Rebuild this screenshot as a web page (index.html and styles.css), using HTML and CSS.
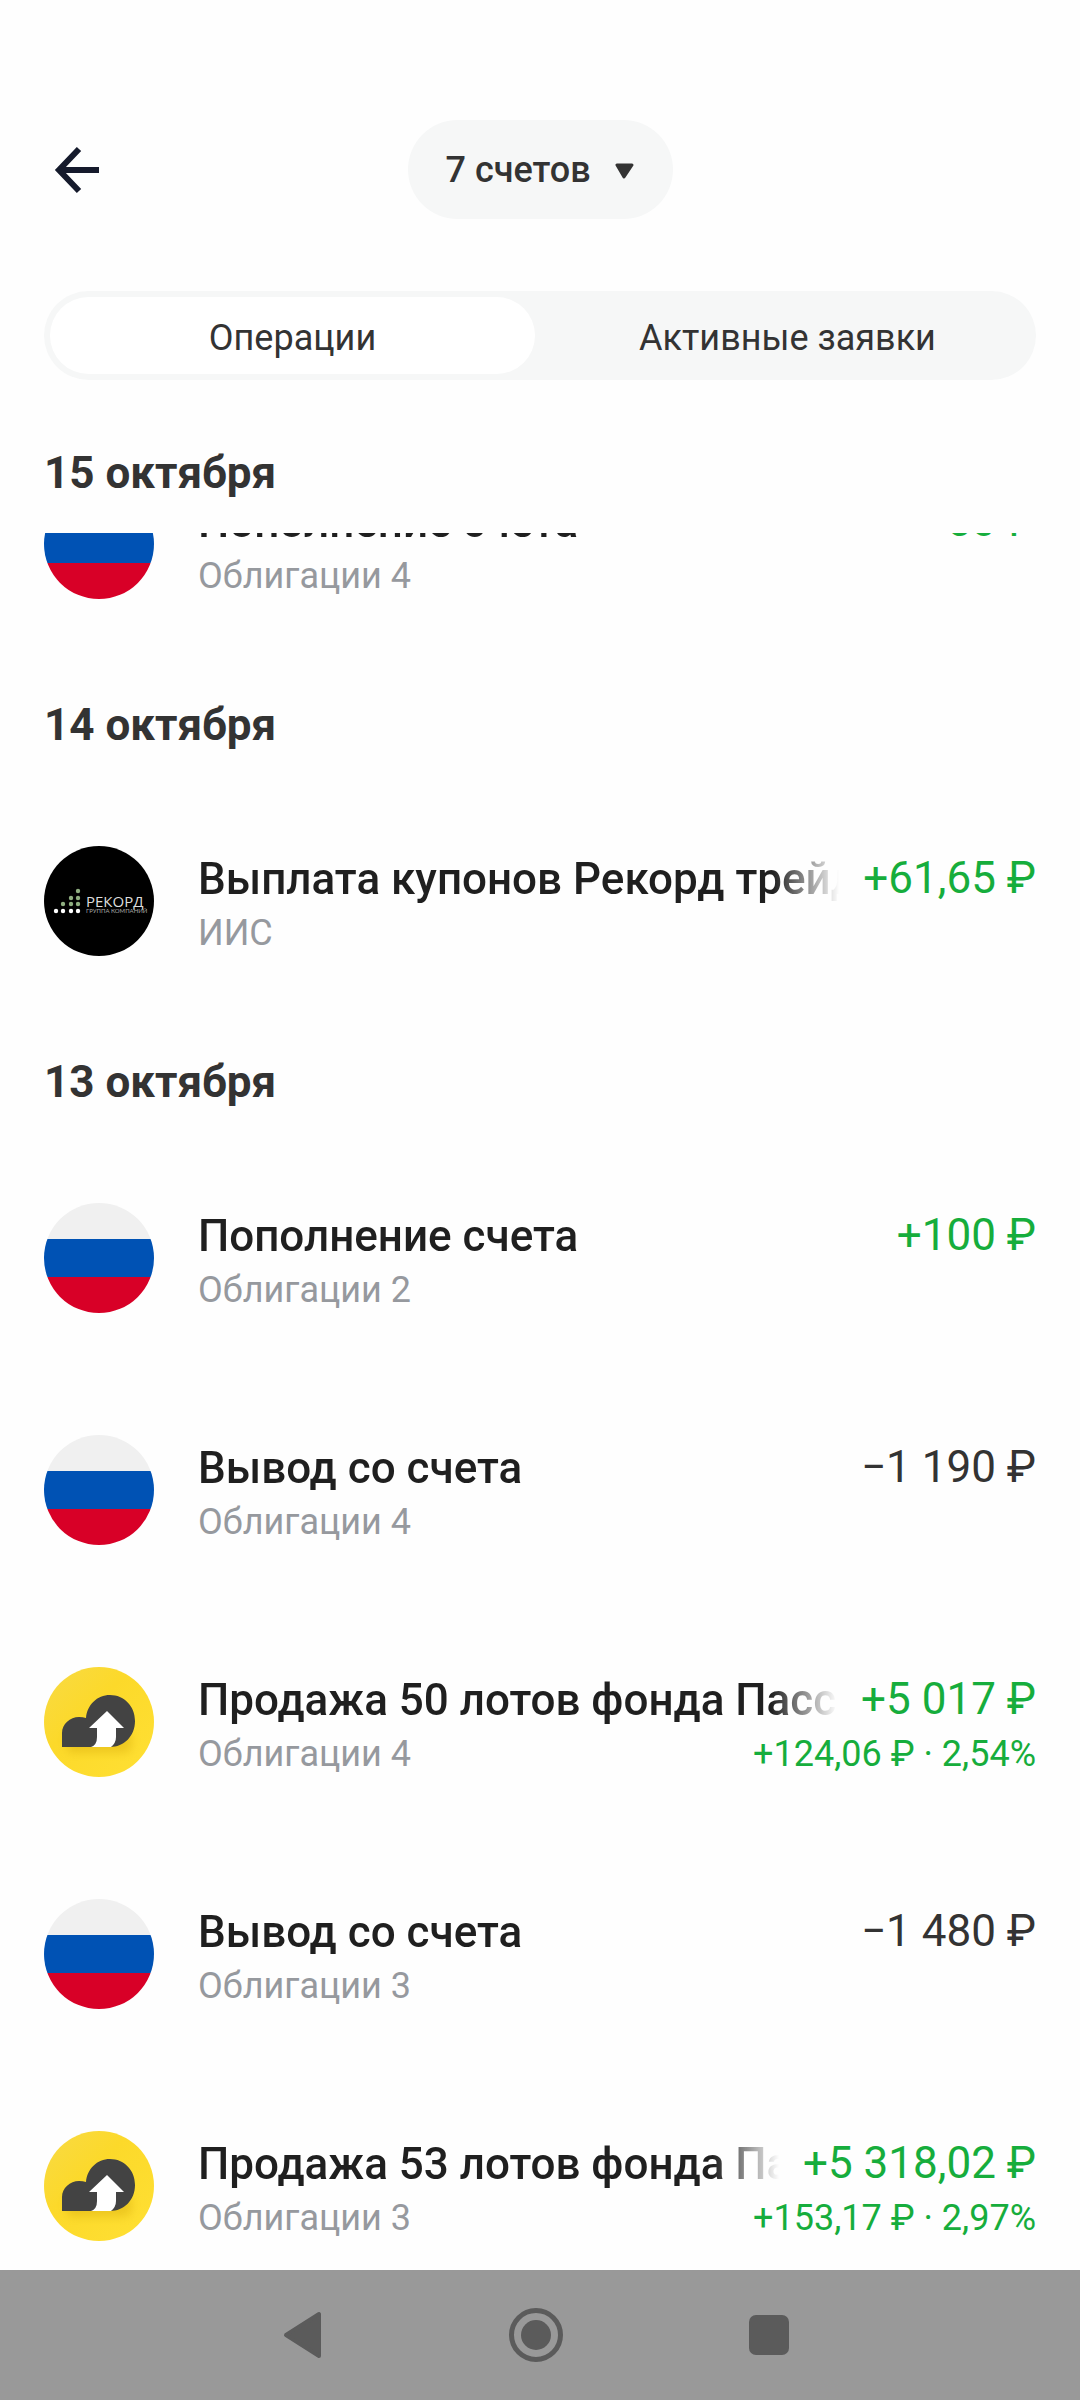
FILE: index.html
```html
<!DOCTYPE html>
<html lang="ru">
<head>
    <title>Операции</title>
    <meta charset="UTF-8">
    <meta name="viewport" content="width=device-width, initial-scale=1.0">
    <link rel="stylesheet" href="styles.css">
</head>
<body>
    <!-- Shared pictures for the operation rows -->
    <svg class="sprite" aria-hidden="true">
        <defs>
            <clipPath id="round"><circle cx="55" cy="55" r="55"/></clipPath>
            <linearGradient id="yellow" x1="0" y1="0" x2="1" y2="1">
                <stop offset="0" stop-color="#f8da45"/>
                <stop offset="0.4" stop-color="#fcd92a"/>
                <stop offset="1" stop-color="#ffe034"/>
            </linearGradient>
            <filter id="soft" x="-20%" y="-20%" width="140%" height="160%">
                <feGaussianBlur stdDeviation="4"/>
            </filter>
        </defs>
        <symbol id="flag" viewBox="0 0 110 110">
            <g clip-path="url(#round)">
                <rect width="110" height="36" fill="#f0f0f0"/>
                <rect y="36" width="110" height="38" fill="#0052b4"/>
                <rect y="74" width="110" height="36" fill="#d80027"/>
            </g>
        </symbol>
        <symbol id="fund" viewBox="0 0 110 110">
            <circle cx="55" cy="55" r="55" fill="url(#yellow)"/>
            <path d="M22 66h66v12a8 8 0 0 1-8 8H30a8 8 0 0 1-8-8z" fill="#c99a00" opacity="0.3" filter="url(#soft)"/>
            <path d="M18 80V66C18 57 26 50 35 50q4 0 7 1C43 38 53 28 66 28c14 0 25 11 25 26 0 15-11 26-25 26z" fill="#434343"/>
            <path d="M63 44L80 61H72V70Q72 76 67 80H47Q53 78 53 70V61H45z" fill="#fff"/>
        </symbol>
    </svg>

    <div class="app">
        <header class="header">
            <div class="topbar">
                <button class="back" type="button" aria-label="Назад">
                    <svg width="48" height="48" viewBox="0 0 48 48" fill="none" stroke="#151a2c" stroke-width="6">
                        <path d="M47 24H7M27 3L7 24l20 21"/>
                    </svg>
                </button>
                <div class="accounts">
                    <select class="accounts-select" aria-label="Счета">
                        <option>7 счетов</option>
                    </select>
                    <svg class="accounts-arrow" width="20" height="16" viewBox="0 0 20 16">
                        <path d="M2 2h15L9 14z" fill="#333" stroke="#333" stroke-width="3" stroke-linejoin="round"/>
                    </svg>
                </div>
            </div>
            <div class="tabs" role="tablist">
                <button class="tab active" type="button" role="tab" aria-selected="true">Операции</button>
                <button class="tab" type="button" role="tab" aria-selected="false">Активные заявки</button>
            </div>
        </header>

        <main class="list">
            <section>
                <h2 class="date">15 октября</h2>
                <div class="row scrolled">
                    <svg class="avatar"><use href="#flag"/></svg>
                    <div class="info">
                        <div class="line">
                            <span class="title">Пополнение счета</span>
                            <span class="amount plus">+50&nbsp;₽</span>
                        </div>
                        <div class="line small">
                            <span class="account">Облигации 4</span>
                        </div>
                    </div>
                </div>
            </section>

            <section>
                <h2 class="date">14 октября</h2>
                <div class="row">
                    <svg class="avatar" viewBox="0 0 110 110">
                        <circle cx="55" cy="55" r="55"/>
                        <g fill="#fff">
                            <circle cx="12" cy="65" r="2.2"/>
                            <circle cx="19" cy="65" r="2.2"/>
                            <circle cx="27" cy="65" r="2.2"/>
                            <circle cx="34" cy="65" r="2.2"/>
                        </g>
                        <g fill="#8fae80">
                            <circle cx="19" cy="58" r="2.2"/>
                            <circle cx="27" cy="58" r="2.2"/>
                            <circle cx="34" cy="58" r="2.2"/>
                            <circle cx="27" cy="52" r="2.2"/>
                            <circle cx="34" cy="52" r="2.2"/>
                            <circle cx="34" cy="45" r="2.2"/>
                        </g>
                        <text class="logo-name" x="42" y="61">РЕКОРД</text>
                        <text class="logo-sub" x="42" y="67">ГРУППА КОМПАНИЙ</text>
                    </svg>
                    <div class="info">
                        <div class="line">
                            <span class="title">Выплата купонов Рекорд трейд</span>
                            <span class="amount plus">+61,65&nbsp;₽</span>
                        </div>
                        <div class="line small">
                            <span class="account">ИИС</span>
                        </div>
                    </div>
                </div>
            </section>

            <section>
                <h2 class="date">13 октября</h2>
                <div class="row">
                    <svg class="avatar"><use href="#flag"/></svg>
                    <div class="info">
                        <div class="line">
                            <span class="title">Пополнение счета</span>
                            <span class="amount plus">+100&nbsp;₽</span>
                        </div>
                        <div class="line small">
                            <span class="account">Облигации 2</span>
                        </div>
                    </div>
                </div>
                <div class="row">
                    <svg class="avatar"><use href="#flag"/></svg>
                    <div class="info">
                        <div class="line">
                            <span class="title">Вывод со счета</span>
                            <span class="amount">−1&nbsp;190&nbsp;₽</span>
                        </div>
                        <div class="line small">
                            <span class="account">Облигации 4</span>
                        </div>
                    </div>
                </div>
                <div class="row">
                    <svg class="avatar"><use href="#fund"/></svg>
                    <div class="info">
                        <div class="line">
                            <span class="title">Продажа 50 лотов фонда Пасс</span>
                            <span class="amount plus">+5&nbsp;017&nbsp;₽</span>
                        </div>
                        <div class="line small">
                            <span class="account">Облигации 4</span>
                            <span class="plus">+124,06 ₽ · 2,54%</span>
                        </div>
                    </div>
                </div>
                <div class="row">
                    <svg class="avatar"><use href="#flag"/></svg>
                    <div class="info">
                        <div class="line">
                            <span class="title">Вывод со счета</span>
                            <span class="amount">−1&nbsp;480&nbsp;₽</span>
                        </div>
                        <div class="line small">
                            <span class="account">Облигации 3</span>
                        </div>
                    </div>
                </div>
                <div class="row">
                    <svg class="avatar"><use href="#fund"/></svg>
                    <div class="info">
                        <div class="line">
                            <span class="title">Продажа 53 лотов фонда Па</span>
                            <span class="amount plus">+5&nbsp;318,02&nbsp;₽</span>
                        </div>
                        <div class="line small">
                            <span class="account">Облигации 3</span>
                            <span class="plus">+153,17 ₽ · 2,97%</span>
                        </div>
                    </div>
                </div>
            </section>
        </main>

        <nav class="navbar">
            <button class="nav-btn" type="button" aria-label="Назад">
                <svg width="54" height="54" viewBox="0 0 54 54">
                    <path d="M43 6v42L10 27z" fill="#5b5b5b" stroke="#5b5b5b" stroke-width="4" stroke-linejoin="round"/>
                </svg>
            </button>
            <button class="nav-btn" type="button" aria-label="Домой">
                <svg width="54" height="54" viewBox="0 0 54 54">
                    <circle cx="27" cy="27" r="24.5" fill="none" stroke="#5b5b5b" stroke-width="5"/>
                    <circle cx="27" cy="27" r="15" fill="#5b5b5b"/>
                </svg>
            </button>
            <button class="nav-btn" type="button" aria-label="Недавние">
                <svg width="54" height="54" viewBox="0 0 54 54">
                    <rect x="7" y="7" width="40" height="40" rx="7" fill="#5b5b5b"/>
                </svg>
            </button>
        </nav>
    </div>
</body>
</html>
```
FILE: styles.css
```css
* {
    box-sizing: border-box;
}
body {
    font-family: Roboto, "Liberation Sans", sans-serif;
    margin: 0;
    color: #333;
    background-color: #fefefe;
}
button, select {
    font: inherit;
    color: inherit;
    border: 0;
    padding: 0;
    background: none;
}
.sprite {
    position: absolute;
    width: 0;
    height: 0;
}
.app {
    display: flex;
    flex-direction: column;
    height: 100vh;
}

/* header */
.header {
    padding: 120px 44px 28px;
}
.topbar {
    display: grid;
    grid-template-columns: 1fr auto 1fr;
    align-items: center;
    margin-bottom: 72px;
}
.back {
    display: flex;
    justify-self: start;
    padding-left: 8px;
}
.accounts {
    position: relative;
}
.accounts-select {
    display: block;
    appearance: none;
    height: 99px;
    padding: 0 81px 0 38px;
    border-radius: 50px;
    background-color: #f6f7f7;
    font-size: 36px;
    font-weight: 500;
}
.accounts-arrow {
    position: absolute;
    top: 43px;
    right: 38px;
    pointer-events: none;
}
.tabs {
    display: grid;
    grid-template-columns: 1fr 1fr;
    gap: 10px;
    padding: 6px;
    border-radius: 45px;
    background-color: #f6f7f7;
}
.tab {
    height: 77px;
    padding-top: 4px;
    border-radius: 39px;
    font-size: 36px;
}
.tab.active {
    background-color: #fff;
}

/* operations */
.list {
    flex: 1;
    min-height: 0;
    overflow-y: auto;
    scrollbar-width: none;
}
.date {
    position: sticky;
    top: 0;
    z-index: 1;
    margin: 0;
    padding: 39px 44px 34px;
    background-color: #fefefe;
    font-size: 44px;
    line-height: 52px;
    font-weight: 700;
}
.row {
    display: flex;
    gap: 44px;
    padding: 61px 44px;
}
/* partly hidden under the sticky date */
.row.scrolled {
    margin-top: -105px;
}
.avatar {
    flex: none;
    width: 110px;
    height: 110px;
}
.info {
    flex: 1;
    min-width: 0;
    padding-top: 6px;
    margin-bottom: -3px;
}
.line {
    display: flex;
    justify-content: space-between;
    gap: 24px;
    font-size: 44px;
    line-height: 55px;
    white-space: nowrap;
}
.line.small {
    font-size: 36px;
    line-height: 52px;
}
.title {
    flex: 1;
    min-width: 0;
    overflow: hidden;
    color: #1f1f1f;
    font-weight: 500;
    -webkit-mask-image: linear-gradient(to left, transparent, #000 66px);
    mask-image: linear-gradient(to left, transparent, #000 66px);
}
.amount {
    line-height: 52px;
}
.account {
    color: #96999e;
}
.plus {
    color: #16ad3c;
}
.logo-name {
    fill: #ddd;
    font-family: "Open Sans", sans-serif;
    font-size: 15px;
}
.logo-sub {
    fill: #aaa;
    font-family: Lato, sans-serif;
    font-size: 6px;
}

/* system buttons */
.navbar {
    display: flex;
    justify-content: center;
    height: 130px;
    padding-right: 8px;
    background-color: #999;
}
.nav-btn {
    display: flex;
    align-items: center;
    justify-content: center;
    width: 233px;
}
```
